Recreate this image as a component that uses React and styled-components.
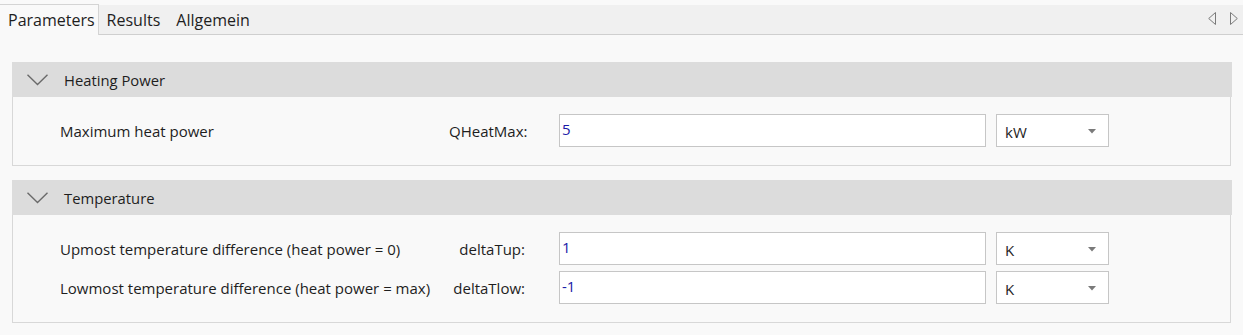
import React from "react";
import styled, { createGlobalStyle } from "styled-components";

const Global = createGlobalStyle`
  html, body { margin: 0; padding: 0; background: #f9f9f9; }
  body { font-family: "Open Sans", "Noto Sans", sans-serif; color: #1e1e1e; }
  * { box-sizing: border-box; }
`;

const Page = styled.div`
  width: 1243px;
  height: 335px;
  background: #f9f9f9;
  display: flex;
  flex-direction: column;
`;

const TabStrip = styled.div`
  margin-top: 5px;
  height: 30px;
  background: #f0f0f0;
  border-bottom: 1px solid #cfcfcf;
  display: flex;
  align-items: flex-end;
`;

const Tab = styled.div`
  height: ${(p) => (p.$active ? "31px" : "28px")};
  margin-bottom: ${(p) => (p.$active ? "-1px" : "0")};
  padding: ${(p) => (p.$active ? "0 3px 0 8px" : "0 8px 0 8px")};
  background: ${(p) => (p.$active ? "#f9f9f9" : "transparent")};
  border-right: ${(p) => (p.$active ? "1px solid #d4d4d4" : "none")};
  border-top: ${(p) => (p.$active ? "1px solid #d4d4d4" : "none")};
  display: flex;
  align-items: center;
  font-size: 16px;
  color: #1e1e1e;
  white-space: nowrap;
`;

const Spacer = styled.div`
  flex: 1;
`;

const Arrows = styled.div`
  display: flex;
  gap: 14px;
  align-self: center;
  padding-right: 5px;
  margin-top: -2px;
`;

const Content = styled.div`
  padding: 27px 11px 0 12px;
  display: flex;
  flex-direction: column;
  gap: 14px;
`;

const Group = styled.section`
  display: flex;
  flex-direction: column;
`;

const Header = styled.div`
  height: 35px;
  background: #dcdcdc;
  display: flex;
  align-items: center;
  padding-left: 15px;
  gap: 16px;
  font-size: 14.8px;
  color: #1e1e1e;
`;

const Body = styled.div`
  border: 1px solid #d8d8d8;
  border-top: none;
  margin-right: 1px;
  padding: 17px 0 18px 0;
  display: flex;
  flex-direction: column;
  gap: 6px;
`;

const Row = styled.div`
  display: grid;
  grid-template-columns: 436px 110px auto;
  align-items: center;
  height: 33px;
  font-size: 15px;
`;

const Desc = styled.div`
  padding-left: 47px;
  white-space: nowrap;
`;

const Name = styled.div`
  text-align: right;
  padding-right: 34px;
  white-space: nowrap;
`;

const Fields = styled.div`
  display: flex;
`;

const Input = styled.div`
  height: 33px;
  width: 427px;
  background: #ffffff;
  border: 1px solid #c6c6c6;
  color: #1a1aa8;
  padding: 4px 0 0 2px;
  font-size: 15px;
`;

const Select = styled.div`
  margin-left: 10px;
  height: 33px;
  width: 113px;
  background: #ffffff;
  border: 1px solid #c6c6c6;
  display: flex;
  align-items: center;
  justify-content: space-between;
  padding: 2px 12px 0 8px;
  font-size: 15px;
  color: #1e1e1e;
`;

const Chevron = () => (
  <svg width="21" height="12" viewBox="0 0 21 12">
    <polyline points="0.5,0.8 10.5,10.5 20.5,0.8" fill="none" stroke="#6a6a6a" strokeWidth="1.4" />
  </svg>
);

const Caret = () => (
  <svg width="8" height="5" viewBox="0 0 8 5">
    <polygon points="0,0 8,0 4,4.5" fill="#7a7a7a" />
  </svg>
);

const TriLeft = () => (
  <svg width="8" height="13" viewBox="0 0 8 13">
    <polygon points="7.5,0.5 7.5,12.5 0.7,6.5" fill="none" stroke="#7a7a7a" strokeWidth="1" />
  </svg>
);
const TriRight = () => (
  <svg width="8" height="13" viewBox="0 0 8 13">
    <polygon points="0.5,0.5 0.5,12.5 7.3,6.5" fill="none" stroke="#7a7a7a" strokeWidth="1" />
  </svg>
);

const groups = [
  {
    title: "Heating Power",
    rows: [{ desc: "Maximum heat power", name: "QHeatMax:", value: "5", unit: "kW" }],
  },
  {
    title: "Temperature",
    rows: [
      { desc: "Upmost temperature difference (heat power = 0)", name: "deltaTup:", value: "1", unit: "K" },
      { desc: "Lowmost temperature difference (heat power = max)", name: "deltaTlow:", value: "-1", unit: "K" },
    ],
  },
];

export default function App() {
  return (
    <Page>
      <Global />
      <TabStrip>
        <Tab $active>Parameters</Tab>
        <Tab>Results</Tab>
        <Tab>Allgemein</Tab>
        <Spacer />
        <Arrows>
          <TriLeft />
          <TriRight />
        </Arrows>
      </TabStrip>
      <Content>
        {groups.map((g) => (
          <Group key={g.title}>
            <Header>
              <Chevron />
              <span>{g.title}</span>
            </Header>
            <Body>
              {g.rows.map((r) => (
                <Row key={r.name}>
                  <Desc>{r.desc}</Desc>
                  <Name>{r.name}</Name>
                  <Fields>
                    <Input>{r.value}</Input>
                    <Select>
                      <span>{r.unit}</span>
                      <Caret />
                    </Select>
                  </Fields>
                </Row>
              ))}
            </Body>
          </Group>
        ))}
      </Content>
    </Page>
  );
}
